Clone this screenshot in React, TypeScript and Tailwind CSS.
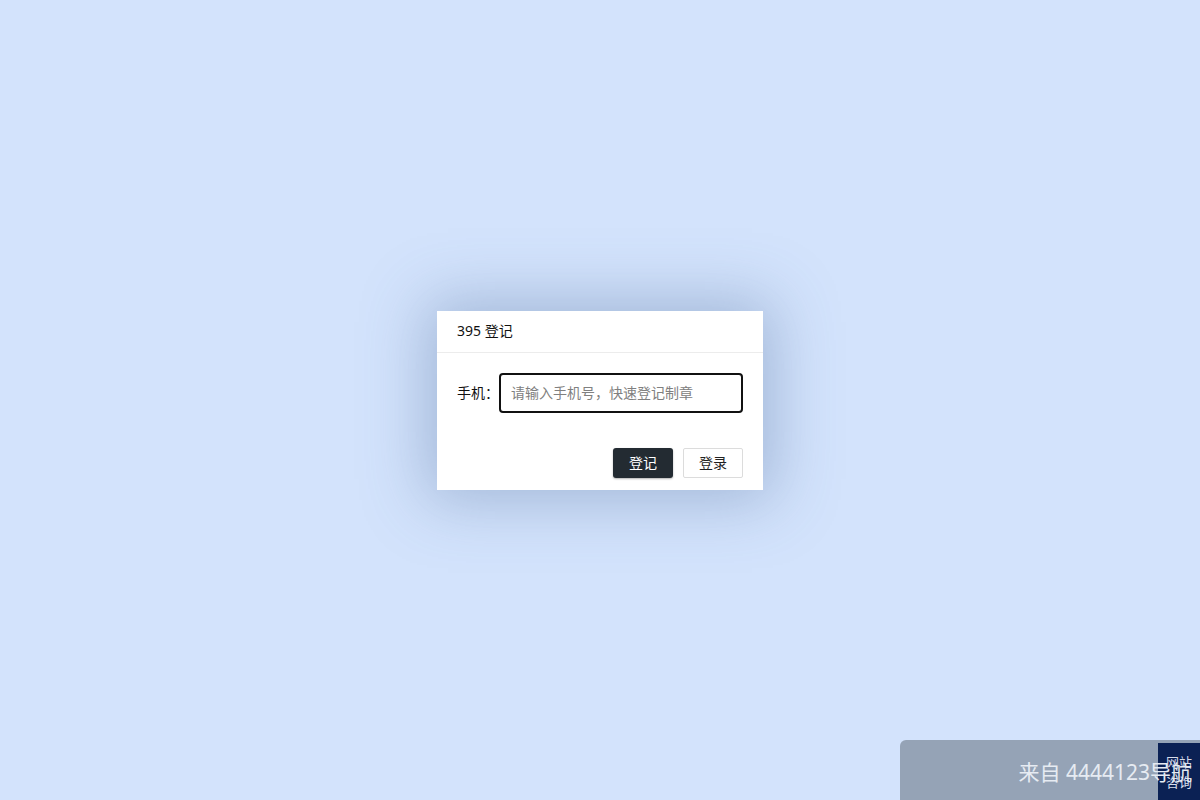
export default function App() {
  return (
    <div
      className="relative flex min-h-screen w-full items-center justify-center bg-[#d3e3fc] text-[#111]"
      style={{ fontFamily: '"Noto Sans", "Noto Sans CJK SC", sans-serif' }}
    >
      <div className="w-[326px] bg-white shadow-[0_0_60px_10px_rgba(70,100,150,0.35)]">
        <div className="flex h-[42px] items-center border-b border-[#ececec] px-5 pb-[2px] text-[14px]">
          395 登记
        </div>
        <div className="flex items-center px-5 pt-5">
          <span className="w-[42px] text-[14px]">手机：</span>
          <input
            className="h-[40px] w-[244px] rounded-[4px] border-2 border-[#111] px-[10px] text-[14px] outline-none placeholder:text-[#808080]"
            placeholder="请输入手机号，快速登记制章"
          />
        </div>
        <div className="flex justify-end gap-[10px] px-5 pb-3 pt-[35px]">
          <button className="h-[30px] w-[60px] rounded-[3px] bg-[#232b32] text-[14px] text-white shadow-[0_1px_2px_rgba(0,0,0,0.3)]">
            登记
          </button>
          <button className="h-[30px] w-[60px] rounded-[2px] border border-[#dcdcdc] bg-white text-[14px] text-[#222]">
            登录
          </button>
        </div>
      </div>

      <div className="absolute bottom-0 right-0 h-[60px] w-[300px] rounded-tl-[6px] bg-[#95a3b6]" />
      <div className="absolute bottom-0 right-0 flex h-[57px] w-[42px] flex-col justify-center bg-[#0b2154] pl-[8px] text-[13px] leading-[20px] text-[#d6dcea]">
        <span>网站</span>
        <span>咨询</span>
      </div>
      <div className="absolute bottom-0 right-0 flex h-[60px] w-[300px] items-center justify-end pr-[8px] pt-[6px] text-[21px] text-[#e6ebf2]">
        来自 4444123导航
      </div>
    </div>
  );
}
